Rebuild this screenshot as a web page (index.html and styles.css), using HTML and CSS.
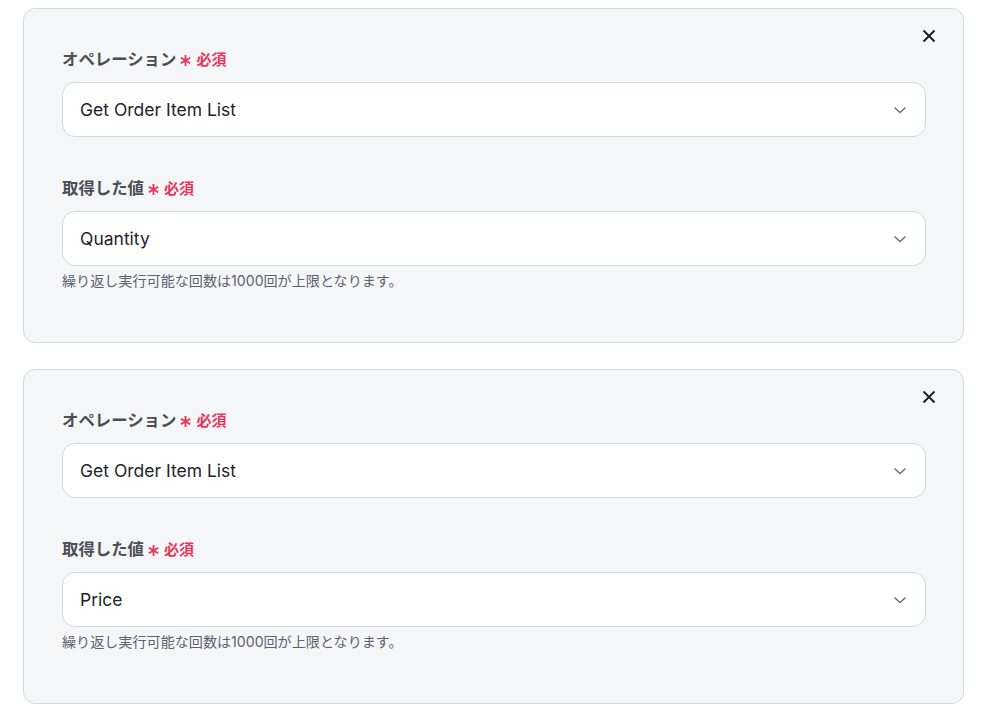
FILE: index.html
```html
<!DOCTYPE html>
<html lang="ja">
<head>
  <meta charset="UTF-8" />
  <meta name="viewport" content="width=device-width, initial-scale=1" />
  <title>繰り返し処理</title>
  <link rel="stylesheet" href="styles.css">
</head>
<body>
  <div class="loop-list">

    <!-- Bloc 1 -->
    <section class="loop-card">
      <button class="close-btn" aria-label="削除">
        <svg viewBox="0 0 14 14" width="14" height="14"><path d="M1.5 1.5 L12.5 12.5 M12.5 1.5 L1.5 12.5" /></svg>
      </button>

      <div class="field">
        <label class="field-label">オペレーション<span class="required"><svg class="star" viewBox="0 0 12 12" width="13" height="13"><path d="M6 1 V11 M1.7 3.5 L10.3 8.5 M10.3 3.5 L1.7 8.5" /></svg>必須</span></label>
        <div class="select-box">
          <span>Get Order Item List</span>
          <svg class="chevron" viewBox="0 0 14 8" width="14" height="8"><path d="M1.5 1.5 L7 6.5 L12.5 1.5" /></svg>
        </div>
      </div>

      <div class="field">
        <label class="field-label">取得した値<span class="required"><svg class="star" viewBox="0 0 12 12" width="13" height="13"><path d="M6 1 V11 M1.7 3.5 L10.3 8.5 M10.3 3.5 L1.7 8.5" /></svg>必須</span></label>
        <div class="select-box">
          <span>Quantity</span>
          <svg class="chevron" viewBox="0 0 14 8" width="14" height="8"><path d="M1.5 1.5 L7 6.5 L12.5 1.5" /></svg>
        </div>
        <p class="help">繰り返し実行可能な回数は1000回が上限となります。</p>
      </div>
    </section>

    <!-- Bloc 2 -->
    <section class="loop-card">
      <button class="close-btn" aria-label="削除">
        <svg viewBox="0 0 14 14" width="14" height="14"><path d="M1.5 1.5 L12.5 12.5 M12.5 1.5 L1.5 12.5" /></svg>
      </button>

      <div class="field">
        <label class="field-label">オペレーション<span class="required"><svg class="star" viewBox="0 0 12 12" width="13" height="13"><path d="M6 1 V11 M1.7 3.5 L10.3 8.5 M10.3 3.5 L1.7 8.5" /></svg>必須</span></label>
        <div class="select-box">
          <span>Get Order Item List</span>
          <svg class="chevron" viewBox="0 0 14 8" width="14" height="8"><path d="M1.5 1.5 L7 6.5 L12.5 1.5" /></svg>
        </div>
      </div>

      <div class="field">
        <label class="field-label">取得した値<span class="required"><svg class="star" viewBox="0 0 12 12" width="13" height="13"><path d="M6 1 V11 M1.7 3.5 L10.3 8.5 M10.3 3.5 L1.7 8.5" /></svg>必須</span></label>
        <div class="select-box">
          <span>Price</span>
          <svg class="chevron" viewBox="0 0 14 8" width="14" height="8"><path d="M1.5 1.5 L7 6.5 L12.5 1.5" /></svg>
        </div>
        <p class="help">繰り返し実行可能な回数は1000回が上限となります。</p>
      </div>
    </section>

  </div>
</body>
</html>
```

FILE: styles.css
```css
* {
  margin: 0;
  padding: 0;
  box-sizing: border-box;
}

body {
  background: #fff;
  font-family: Inter, "Noto Sans CJK JP", sans-serif;
  color: #1f2329;
}

/* Liste des blocs */
.loop-list {
  display: flex;
  flex-direction: column;
  gap: 26px;
  padding: 8px 0 0 23px;
}

.loop-card {
  position: relative;
  width: 941px;
  height: 335px;
  background: #f5f6f8;
  border: 1px solid #d3d8df;
  border-radius: 12px;
  padding: 38px 37px 0 38px;
}

.close-btn {
  position: absolute;
  top: 20px;
  right: 27px;
  width: 14px;
  height: 14px;
  border: none;
  background: none;
  cursor: pointer;
  display: flex;
}

.close-btn svg path {
  stroke: #1a1a1a;
  stroke-width: 1.8;
  fill: none;
}

.field + .field {
  margin-top: 39px;
}

.field-label {
  display: flex;
  align-items: center;
  height: 24px;
  padding-bottom: 2px;
  font-size: 16.4px;
  font-weight: 700;
  color: #4a4f57;
  margin-bottom: 11px;
}

.required {
  display: flex;
  align-items: center;
  margin-left: 3px;
  font-size: 15px;
  font-weight: 700;
  color: #e8345a;
}

.star {
  margin: 5px 4px 0 0;
}

.star path {
  stroke: #e8345a;
  stroke-width: 1.7;
  fill: none;
}

.select-box {
  height: 55px;
  background: #fff;
  border: 1px solid #d3d8df;
  border-radius: 13px;
  display: flex;
  align-items: center;
  justify-content: space-between;
  padding: 0 18px 0 17px;
  font-size: 17.5px;
  color: #1f2329;
}

.chevron path {
  stroke: #6b7079;
  stroke-width: 1.5;
  fill: none;
}

.help {
  margin-top: 5px;
  font-size: 14.1px;
  line-height: 20px;
  color: #5c6370;
}
```
